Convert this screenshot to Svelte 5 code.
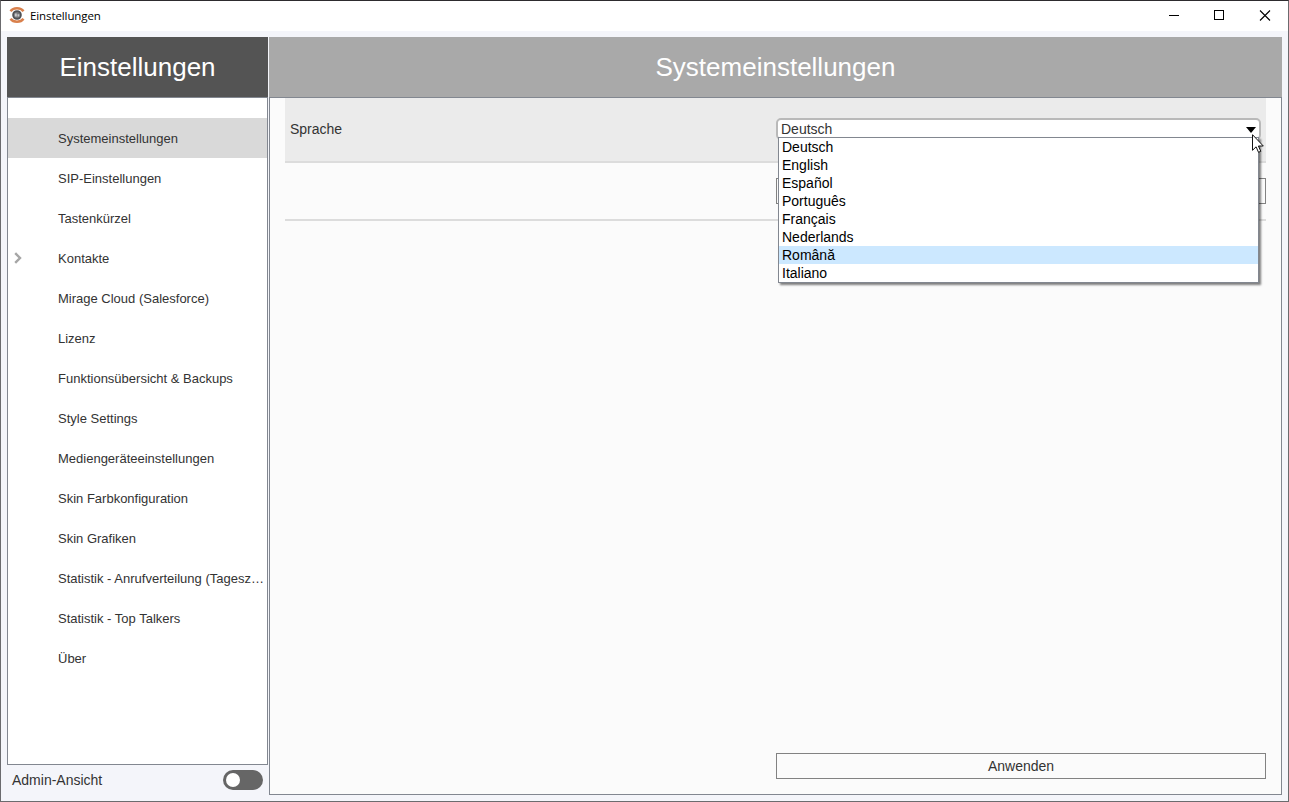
<script>
    let current = 'Systemeinstellungen';
    let language = 'Deutsch';
    let hovered = 'Română';
    let open = true;
    let admin = false;

    const pages = [
        { name: 'Systemeinstellungen' },
        { name: 'SIP-Einstellungen' },
        { name: 'Tastenkürzel' },
        { name: 'Kontakte', expandable: true },
        { name: 'Mirage Cloud (Salesforce)' },
        { name: 'Lizenz' },
        { name: 'Funktionsübersicht & Backups' },
        { name: 'Style Settings' },
        { name: 'Mediengeräteeinstellungen' },
        { name: 'Skin Farbkonfiguration' },
        { name: 'Skin Grafiken' },
        { name: 'Statistik - Anrufverteilung (Tagesz…' },
        { name: 'Statistik - Top Talkers' },
        { name: 'Über' }
    ];

    const languages = [
        'Deutsch',
        'English',
        'Español',
        'Português',
        'Français',
        'Nederlands',
        'Română',
        'Italiano'
    ];

    function choose(lang) {
        language = lang;
        open = false;
    }
</script>

<div class="window">
    <header class="titlebar">
        <svg class="logo" width="16" height="16" viewBox="0 0 16 16">
            <path d="M1.500 4.200C3 2 5.300 1.200 8 1.200s5 .8 6.500 3" fill="none" stroke="#d9804c" stroke-width="2.400" />
            <path d="M1.500 11.800C3 14 5.300 14.800 8 14.800s5-.8 6.500-3" fill="none" stroke="#d9804c" stroke-width="2.400" />
            <circle cx="8" cy="8" r="3.900" fill="#77787b" stroke="#505155" stroke-width="1.800" />
            <path d="M5.800 6.500h2v3h-2zM8.500 7.200h1.800v2.300H8.500z" fill="#c9c9cc" />
        </svg>
        <span class="caption">Einstellungen</span>
        <svg class="controls" width="138" height="30" viewBox="0 0 138 30" fill="none" stroke="#000" shape-rendering="crispEdges">
            <path d="M19 14.500h10" />
            <rect x="64.500" y="9.500" width="9" height="9" />
            <path d="M110 9.500l10 10M120 9.500l-10 10" stroke-width="1.100" shape-rendering="auto" />
        </svg>
    </header>

    <div class="body">
        <aside>
            <h1 class="dark">Einstellungen</h1>
            <nav>
                {#each pages as page}
                    <button type="button" class="page" class:active={page.name === current} on:click={() => current = page.name}>
                        <span class="expander">
                            {#if page.expandable}
                                <svg width="8" height="12" viewBox="0 0 8 12">
                                    <path d="M1.200 1.200L6 6l-4.800 4.800" fill="none" stroke="#a6a6a6" stroke-width="2.400" />
                                </svg>
                            {/if}
                        </span>
                        <span class="name">{page.name}</span>
                    </button>
                {/each}
            </nav>
            <div class="admin">
                <span>Admin-Ansicht</span>
                <button type="button" class="switch" class:on={admin} aria-label="Admin-Ansicht" on:click={() => admin = !admin}>
                    <span class="knob"></span>
                </button>
            </div>
        </aside>

        <main>
            <h1>{current}</h1>
            <div class="panel">
                <div class="row shaded">
                    <span class="label">Sprache</span>
                    <div class="select">
                        <button type="button" class="value" on:click={() => open = !open}>
                            {language}
                            <svg class="arrow" width="10" height="6" viewBox="0 0 10 6">
                                <path d="M0 0h10L5 6z" fill="#000" />
                            </svg>
                        </button>
                        {#if open}
                            <ul class="options">
                                {#each languages as lang}
                                    <li class:hovered={lang === hovered}>
                                        <button type="button" on:mouseenter={() => hovered = lang} on:click={() => choose(lang)}>{lang}</button>
                                    </li>
                                {/each}
                            </ul>
                        {/if}
                        <svg class="cursor" width="12" height="19" viewBox="0 0 12 19">
                            <path d="M.5.700v15.600l3.600-3.500 2.400 5.500 2.300-1-2.400-5.300h4.900z" fill="#fff" stroke="#111" />
                        </svg>
                    </div>
                </div>
                <div class="row second">
                    <button type="button" class="wide" aria-label="Auswahl"></button>
                </div>
                <div class="footer">
                    <button type="button" class="wide">Anwenden</button>
                </div>
            </div>
        </main>
    </div>
</div>

<style>
    :global(body) {
        margin: 0;
        overflow: hidden;
    }

    .window {
        box-sizing: border-box;
        width: 1289px;
        height: 802px;
        display: flex;
        flex-direction: column;
        border: 1px solid #6b6b6e;
        border-top-color: #2d2b2e;
        background: #f4f5fa;
        color: #333;
        font-family: "Liberation Sans", Arial, sans-serif;
        font-size: 14px;
    }

    button {
        margin: 0;
        padding: 0;
        border: 0;
        background: none;
        color: inherit;
        font: inherit;
        text-align: left;
    }

    .titlebar {
        display: flex;
        align-items: center;
        height: 30px;
        padding-left: 8px;
        background: #fff;
    }

    .logo {
        margin-top: -2px;
    }

    .caption {
        flex: 1;
        margin: -2px 0 0 5px;
        color: #000;
        font-family: "Open Sans", "Noto Sans", sans-serif;
        font-size: 11.5px;
        letter-spacing: -0.1px;
    }

    .body {
        flex: 1;
        display: flex;
        gap: 1px;
        padding: 6px;
        min-height: 0;
    }

    aside {
        width: 261px;
        display: flex;
        flex-direction: column;
    }

    h1 {
        height: 60px;
        margin: 0;
        background: #a9a9a9;
        color: #fff;
        font-size: 26px;
        font-weight: normal;
        line-height: 60px;
        text-align: center;
    }

    h1.dark {
        background: #545454;
    }

    nav {
        box-sizing: border-box;
        height: 668px;
        padding-top: 20px;
        border: 1px solid #828790;
        background: #fff;
    }

    .page {
        display: flex;
        align-items: center;
        width: 100%;
        height: 40px;
        font-size: 13px;
    }

    .page.active {
        background: #d9d9d9;
    }

    .expander {
        flex: 0 0 44px;
        display: flex;
        padding-left: 6px;
    }

    .name {
        flex: 1;
        white-space: nowrap;
    }

    .admin {
        display: flex;
        align-items: center;
        justify-content: space-between;
        height: 30px;
        padding: 0 5px;
    }

    .switch {
        box-sizing: border-box;
        display: flex;
        width: 40px;
        height: 20px;
        padding: 3px;
        border-radius: 10px;
        background: #666;
    }

    .switch.on {
        justify-content: flex-end;
    }

    .knob {
        width: 14px;
        height: 14px;
        border-radius: 50%;
        background: #fff;
    }

    main {
        flex: 1;
        display: flex;
        flex-direction: column;
    }

    .panel {
        box-sizing: border-box;
        height: 698px;
        display: flex;
        flex-direction: column;
        padding: 0 15px;
        border: 1px solid #828790;
        background: #fbfbfb;
    }

    .row {
        box-sizing: border-box;
        display: flex;
        height: 65px;
        border-bottom: 2px solid #dcdcdc;
    }

    .shaded {
        justify-content: space-between;
        padding: 20px 5px 0;
        background: #ebebeb;
    }

    .second {
        height: 58px;
        justify-content: flex-end;
        padding-top: 15px;
    }

    .label {
        line-height: 22px;
    }

    .select {
        position: relative;
        width: 485px;
        height: 22px;
    }

    .value {
        box-sizing: border-box;
        display: flex;
        align-items: center;
        justify-content: space-between;
        width: 100%;
        height: 22px;
        padding: 0 3px;
        border: 2px solid #b9b9b9;
        border-radius: 5px;
        background: #fff;
    }

    .arrow {
        margin-top: 2px;
    }

    .options {
        position: absolute;
        z-index: 1;
        top: 19px;
        left: 2px;
        width: 479px;
        margin: 0;
        padding: 0;
        border: 1px solid #828790;
        background: #fff;
        box-shadow: 2px 2px 2px rgba(0, 0, 0, 0.5);
        color: #000;
        list-style: none;
    }

    .options li {
        height: 18px;
    }

    .options button {
        display: block;
        width: 100%;
        padding-left: 3px;
        line-height: 18px;
    }

    .hovered {
        background: #cce8ff;
    }

    .cursor {
        position: absolute;
        z-index: 2;
        top: 16px;
        left: 476px;
    }

    .wide {
        box-sizing: border-box;
        width: 490px;
        height: 26px;
        border: 1px solid #828282;
        background: #fbfbfb;
        text-align: center;
    }

    .footer {
        display: flex;
        justify-content: flex-end;
        margin-top: auto;
        padding-bottom: 15px;
    }
</style>
